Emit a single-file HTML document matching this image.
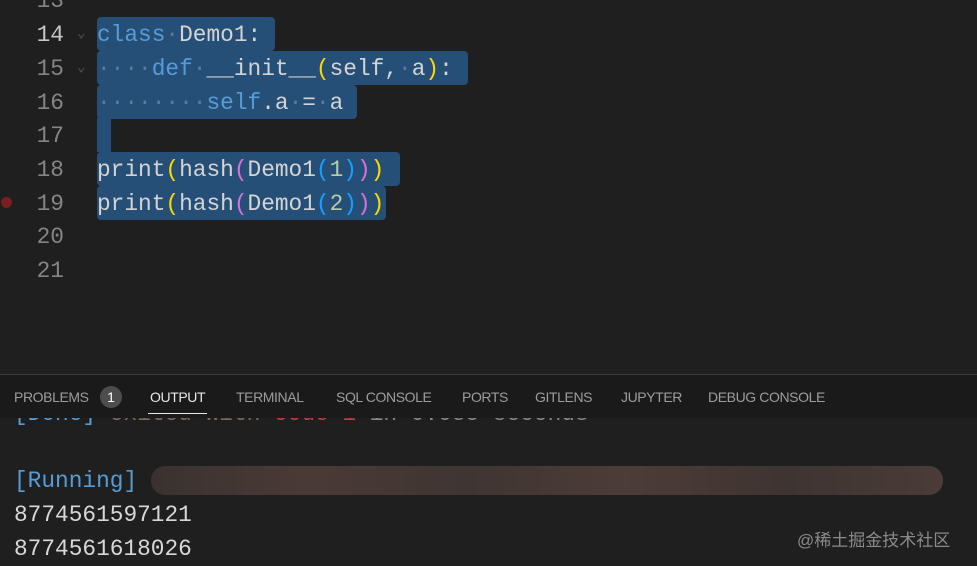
<!DOCTYPE html>
<html><head><meta charset="utf-8"><style>
html,body{margin:0;padding:0;width:977px;height:566px;overflow:hidden;background:#1f1f1f;}
.mono{font-family:"Liberation Mono","DejaVu Sans Mono",monospace;font-size:22.8px;}
.ln{position:absolute;left:0;width:64px;text-align:right;color:#858585;}
.code{position:absolute;left:97px;color:#d4d4d4;white-space:pre;}
.sel{position:absolute;background:#264f78;border-radius:4px;}
.k{color:#569cd6}.y{color:#ffd700}.p{color:#da70d6}.b{color:#179fff}.n{color:#b5cea8}.d{color:#5d7a99}
.tabs{position:absolute;left:0;top:375px;width:977px;height:43px;background:#1a1a1a;font-family:"Liberation Sans",sans-serif;font-size:14px;color:#9d9d9d;}
.tabs span{position:absolute;top:14px;white-space:nowrap;letter-spacing:-0.4px}
.out{position:absolute;left:14px;white-space:pre;color:#d8d8d8;}
</style></head><body>
<div style="position:absolute;left:0;top:374px;width:977px;height:1px;background:#3a3a3a"></div>

<div class="sel" style="left:97px;top:17px;width:178px;height:34px"></div>
<div class="sel" style="left:97px;top:51px;width:371px;height:34px"></div>
<div class="sel" style="left:97px;top:85px;width:260px;height:34px"></div>
<div class="sel" style="left:97px;top:118px;width:14px;height:34px;border-radius:0"></div>
<div class="sel" style="left:97px;top:152px;width:303px;height:34px"></div>
<div class="sel" style="left:97px;top:186px;width:289px;height:34px"></div>

<div class="mono">
<div class="ln" style="top:-16px;line-height:34px">13</div>
<div class="ln" style="top:18px;line-height:34px;color:#c6c6c6">14</div>
<div class="ln" style="top:52px;line-height:34px">15</div>
<div class="ln" style="top:86px;line-height:34px">16</div>
<div class="ln" style="top:119px;line-height:34px">17</div>
<div class="ln" style="top:153px;line-height:34px">18</div>
<div class="ln" style="top:187px;line-height:34px">19</div>
<div class="ln" style="top:220px;line-height:34px">20</div>
<div class="ln" style="top:254px;line-height:34px">21</div>
<div style="position:absolute;left:77px;top:17px;line-height:34px;color:#555;font-size:14px">⌄</div>
<div style="position:absolute;left:77px;top:51px;line-height:34px;color:#555;font-size:14px">⌄</div>
<div style="position:absolute;left:1px;top:197px;width:11px;height:11px;border-radius:50%;background:#7a1f1f"></div>

<div class="code" style="top:18px;line-height:34px"><span class="k">class</span><span class="d">·</span>Demo1:</div>
<div class="code" style="top:52px;line-height:34px"><span class="d">····</span><span class="k">def</span><span class="d">·</span>__init__<span class="y">(</span>self,<span class="d">·</span>a<span class="y">)</span>:</div>
<div class="code" style="top:86px;line-height:34px"><span class="d">········</span><span class="k">self</span>.a<span class="d">·</span>=<span class="d">·</span>a</div>
<div class="code" style="top:153px;line-height:34px">print<span class="y">(</span>hash<span class="p">(</span>Demo1<span class="b">(</span><span class="n">1</span><span class="b">)</span><span class="p">)</span><span class="y">)</span></div>
<div class="code" style="top:187px;line-height:34px">print<span class="y">(</span>hash<span class="p">(</span>Demo1<span class="b">(</span><span class="n">2</span><span class="b">)</span><span class="p">)</span><span class="y">)</span></div>

<div class="out" style="top:397px;line-height:34px"><span style="color:#569cd6">[Done]</span> <span style="color:#7a6a5a">exited with</span> <span style="color:#c04040">code=1</span> <span style="color:#888">in 0.085 seconds</span></div>
<div class="out" style="top:464px;line-height:34px"><span style="color:#569cd6">[Running]</span></div>
<div class="out" style="top:498px;line-height:34px">8774561597121</div>
<div class="out" style="top:532px;line-height:34px">8774561618026</div>
</div>
<div style="position:absolute;left:151px;top:466px;width:792px;height:29px;border-radius:14px;background:linear-gradient(90deg,#3a3230,#4a3a36 20%,#3f3532 40%,#4d3c37 60%,#3e3431 80%,#4a3c38);"></div>

<div class="tabs">
<span style="left:14px">PROBLEMS</span>
<span style="left:100px;top:11px;width:22px;height:22px;border-radius:11px;background:#4d4d4d;color:#fff;text-align:center;line-height:22px;letter-spacing:0">1</span>
<span style="left:150px;color:#e7e7e7">OUTPUT</span>
<div style="position:absolute;left:148px;top:38px;width:59px;height:1px;background:#e7e7e7"></div>
<span style="left:236px">TERMINAL</span>
<span style="left:336px">SQL CONSOLE</span>
<span style="left:462px">PORTS</span>
<span style="left:535px">GITLENS</span>
<span style="left:621px">JUPYTER</span>
<span style="left:708px">DEBUG CONSOLE</span>
</div>
<div style="position:absolute;left:797px;top:526px;font-family:'Liberation Sans','Noto Sans CJK SC',sans-serif;font-size:17px;color:#8a8a8a">@稀土掘金技术社区</div>
</body></html>
